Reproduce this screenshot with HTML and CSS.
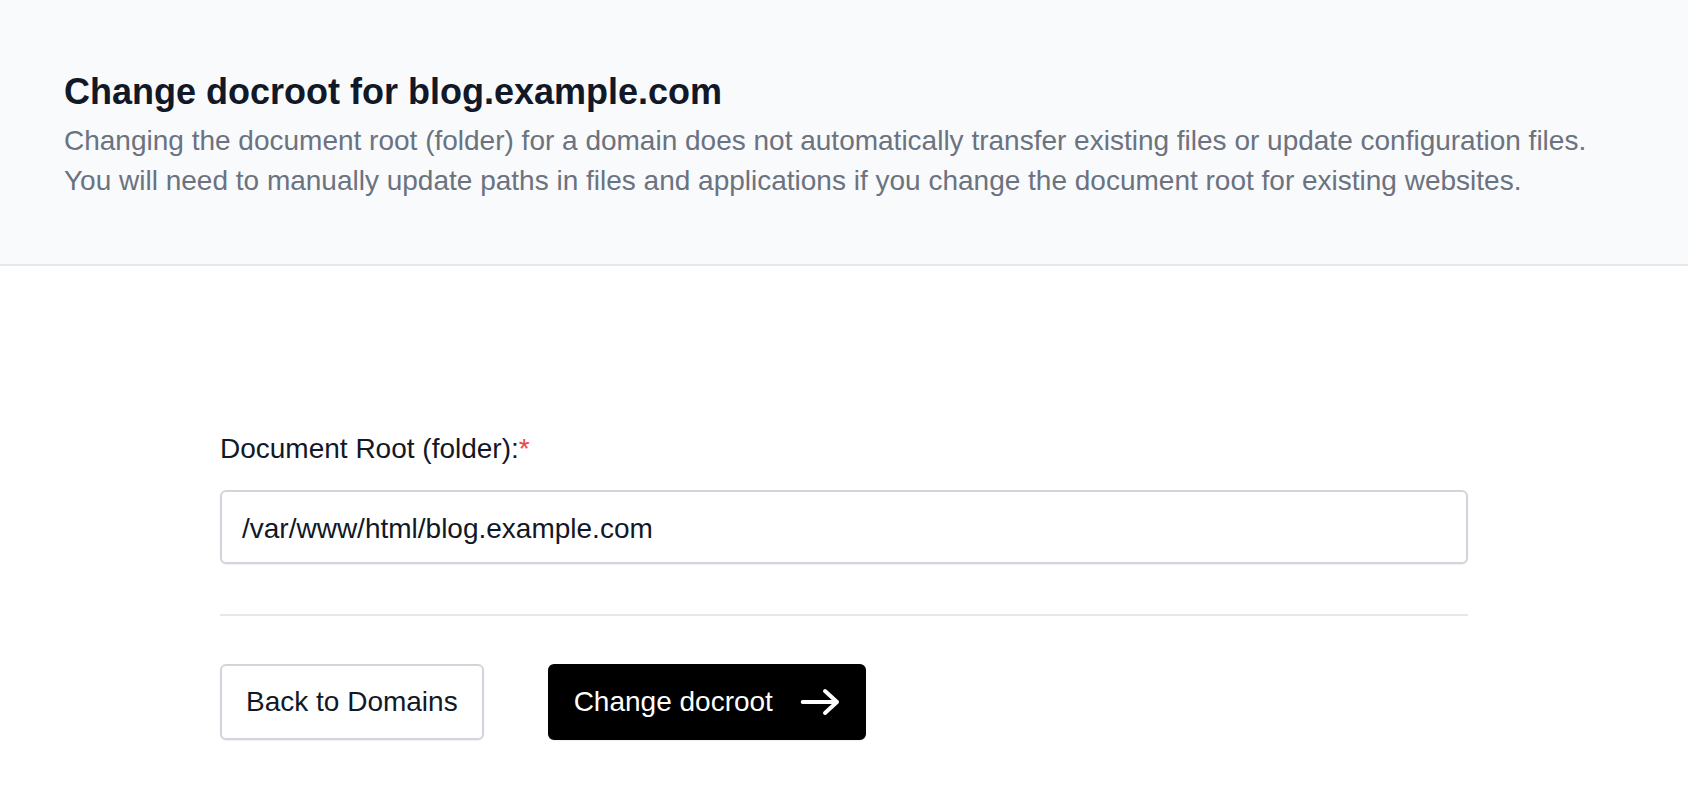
FILE: index.html
```html
<!DOCTYPE html>
<html lang="en">
<head>
<meta charset="utf-8">
<title>Change docroot for blog.example.com</title>
<link rel="stylesheet" href="styles.css">
</head>
<body>
  <header class="page-header">
    <h1 class="page-title">Change docroot for blog.example.com</h1>
    <p class="page-desc">Changing the document root (folder) for a domain does not automatically transfer existing files or update configuration files.<br>You will need to manually update paths in files and applications if you change the document root for existing websites.</p>
  </header>
  <main class="content">
    <form class="form">
      <label class="field-label" for="docroot">Document Root (folder):<span class="req">*</span></label>
      <input class="field-input" id="docroot" type="text" value="/var/www/html/blog.example.com">
      <hr class="divider">
      <div class="actions">
        <a class="btn btn-secondary" href="#">Back to Domains</a>
        <button class="btn btn-primary" type="button">
          <span>Change docroot</span>
          <svg class="btn-icon" width="40" height="28" viewBox="0 0 40 28" fill="none" stroke="currentColor" stroke-width="4" stroke-linecap="round" stroke-linejoin="round"><path d="M2.7 14H37M25 3l12 11-12 11"/></svg>
        </button>
      </div>
    </form>
  </main>
</body>
</html>
```
FILE: styles.css
```css
* { box-sizing: border-box; }
html, body { margin: 0; padding: 0; background: #ffffff; }
body {
  font-family: "Liberation Sans", Arial, Helvetica, sans-serif;
  color: #111827;
}
.page-header {
  background: #f9fafb;
  border-bottom: 2px solid #e5e7eb;
  padding: 72px 64px 63px;
}
.page-title {
  margin: 0;
  font-size: 36px;
  line-height: 40px;
  font-weight: 700;
  color: #111827;
}
.page-desc {
  margin: 9px 0 0;
  font-size: 28px;
  line-height: 40px;
  color: #6b7280;
}
.content {
  padding: 163px 0 60px;
}
.form {
  width: 1248px;
  margin: 0 auto;
  display: flex;
  flex-direction: column;
}
.field-label {
  font-size: 28px;
  line-height: 40px;
  color: #111827;
}
.req { color: #ef4444; }
.field-input {
  margin-top: 21px;
  height: 74px;
  border: 2px solid #d1d5db;
  border-radius: 6px;
  padding: 4px 20px 0;
  font-family: inherit;
  font-size: 28px;
  color: #111827;
  background: #ffffff;
  box-shadow: 0 1px 2px rgba(0, 0, 0, 0.06);
  outline: none;
}
.divider {
  margin: 50px 0 0;
  border: 0;
  height: 2px;
  background: #e5e7eb;
}
.actions {
  margin-top: 48px;
  display: flex;
  align-items: center;
  gap: 64px;
}
.btn {
  display: inline-flex;
  align-items: center;
  height: 76px;
  border-radius: 6px;
  font-family: inherit;
  font-size: 28px;
  line-height: 40px;
  text-decoration: none;
  box-shadow: 0 1px 2px rgba(0, 0, 0, 0.06);
  cursor: pointer;
}
.btn-secondary {
  padding: 0 24px;
  border: 2px solid #d1d5db;
  background: #ffffff;
  color: #111827;
}
.btn-primary {
  padding: 0 24px;
  border: 2px solid #000000;
  background: #000000;
  color: #ffffff;
  gap: 27px;
}
.btn-icon { display: block; }
```
